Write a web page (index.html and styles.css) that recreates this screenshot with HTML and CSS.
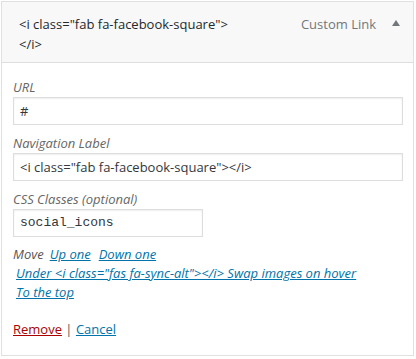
FILE: index.html
```html
<!DOCTYPE html>
<html>
<head>
<meta charset="utf-8">
<link rel="stylesheet" href="styles.css">
</head>
<body>
<div class="item">
  <div class="head">
    <div class="title">&lt;i class="fab fa-facebook-square"&gt;<br>&lt;/i&gt;</div>
    <div class="type">Custom Link</div>
    <div class="arrow"></div>
  </div>
  <div class="settings">
    <div class="field">
      <div class="label">URL</div>
      <div class="input wide">#</div>
    </div>
    <div class="field">
      <div class="label">Navigation Label</div>
      <div class="input wide">&lt;i class="fab fa-facebook-square"&gt;&lt;/i&gt;</div>
    </div>
    <div class="field">
      <div class="label">CSS Classes (optional)</div>
      <div class="input narrow mono">social_icons</div>
    </div>
    <div class="move">
      <div class="line"><span class="mv">Move</span><a class="lnk">Up one</a><a class="lnk">Down one</a></div>
      <div class="line"><a class="lnk">Under &lt;i class="fas fa-sync-alt"&gt;&lt;/i&gt; Swap images on hover</a></div>
      <div class="line"><a class="lnk">To the top</a></div>
    </div>
    <div class="actions"><a class="remove">Remove</a><span class="sep"> | </span><a class="cancel">Cancel</a></div>
  </div>
</div>
</body>
</html>
```

FILE: styles.css
```css
html, body { margin: 0; padding: 0; background: #fff; }
body { font-family: "Open Sans", "Noto Sans", sans-serif; font-size: 13px; color: #23282d; }
.item {
  box-sizing: border-box;
  width: 413px;
  height: 355px;
  margin: 1px 0 0 1px;
  border: 1px solid #e0e0e0;
}
.head {
  display: flex;
  align-items: flex-start;
  background: #f8f8f8;
  border-bottom: 1px solid #dedede;
  height: 61px;
  box-sizing: border-box;
  padding: 12px 0 0 17px;
}
.title { flex: 1; line-height: 20px; color: #23282d; }
.type { color: #72777c; line-height: 20px; margin-right: 16px; }
.arrow {
  width: 0; height: 0;
  border-left: 4px solid transparent;
  border-right: 4px solid transparent;
  border-bottom: 6px solid #72777c;
  margin: 6px 13px 0 0;
}
.settings { padding: 14px 11px 0 11px; }
.field { margin-bottom: 8px; }
.label { font-style: italic; color: #666; line-height: 20px; }
.input {
  box-sizing: border-box;
  height: 28px;
  border: 1px solid #dddddd;
  box-shadow: inset 0 1px 2px rgba(0,0,0,0.07);
  padding: 0 6px;
  line-height: 26px;
  color: #32373c;
  white-space: nowrap;
  overflow: hidden;
}
.wide { width: 390px; }
.narrow { width: 190px; }
.mono { font-family: "Liberation Mono", "DejaVu Sans Mono", monospace; font-size: 13px; }
.move { margin-top: 8px; font-style: italic; }
.line { line-height: 19px; }
.mv { color: #555; margin-right: 6px; }
.lnk { color: #0073aa; text-decoration: underline; margin-right: 8px; }
.line:nth-child(n+2) .lnk { margin-left: 3px; }
.actions { margin-top: 18px; line-height: 19px; }
.remove { color: #a00; text-decoration: underline; }
.sep { color: #555; }
.cancel { color: #0073aa; text-decoration: underline; }
```
